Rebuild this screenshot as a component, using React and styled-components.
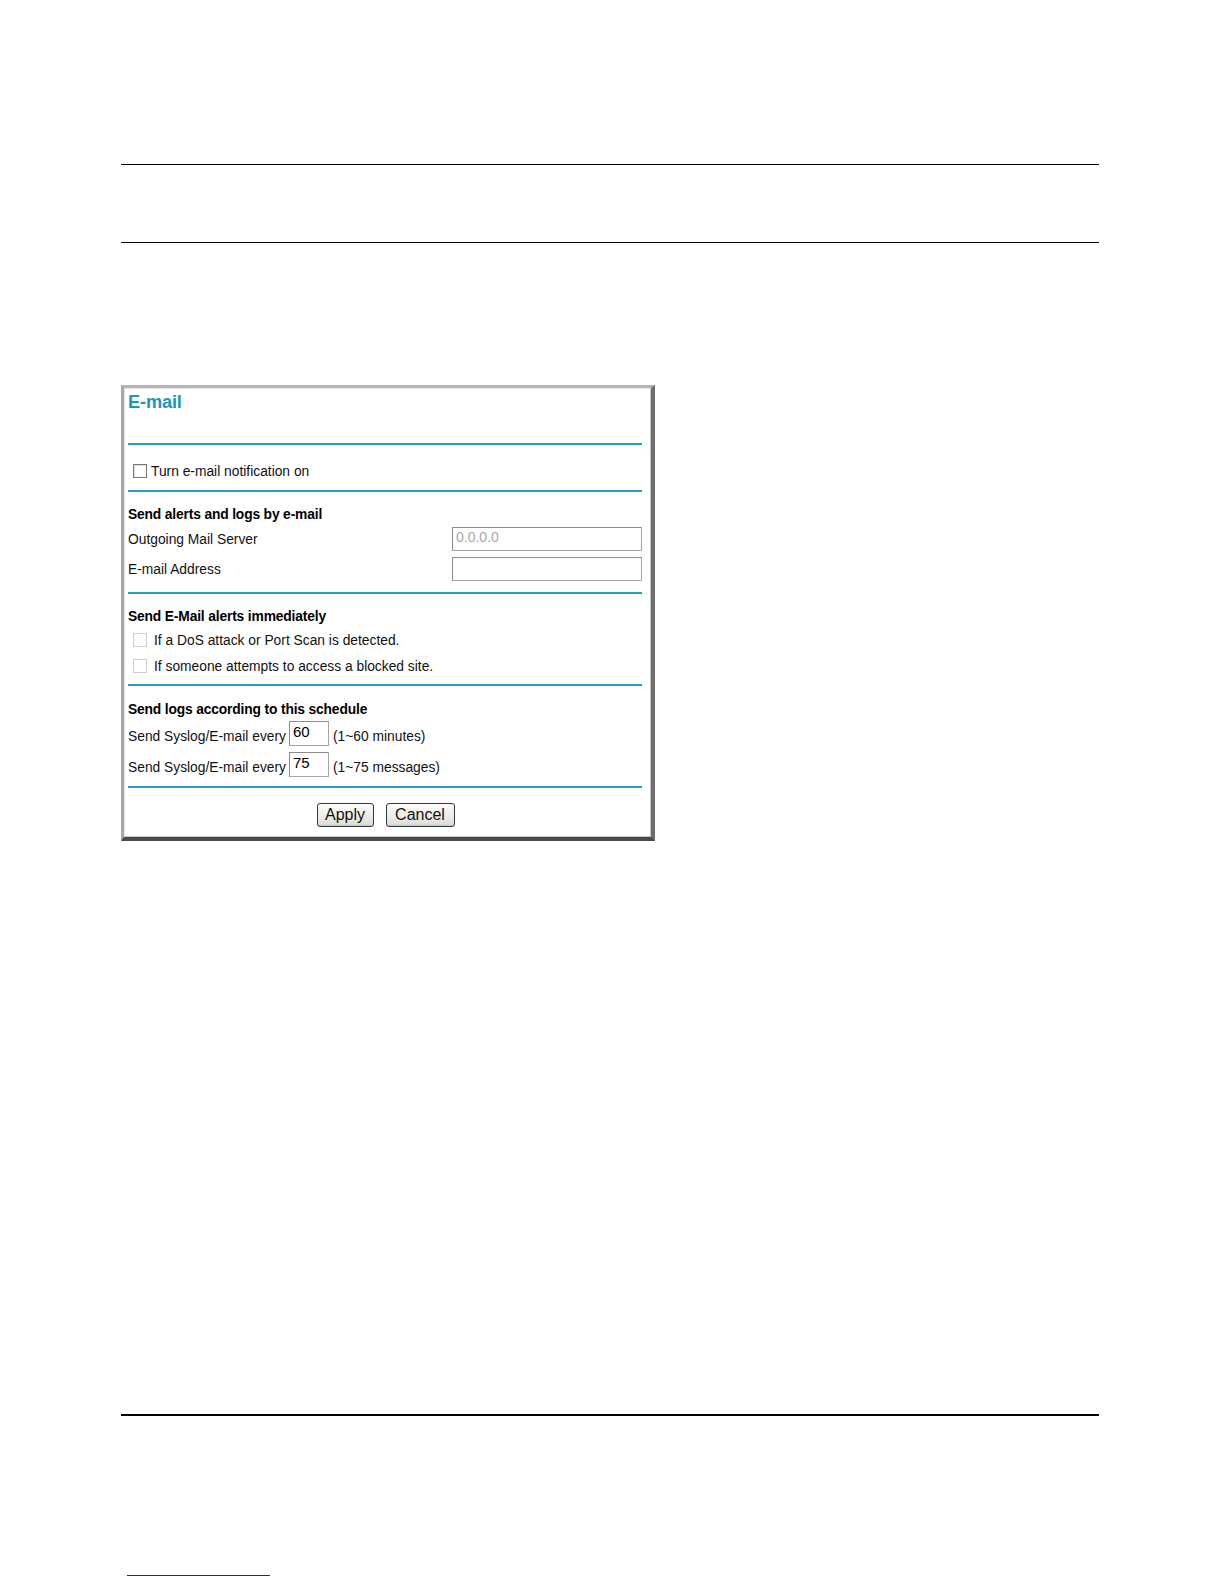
import React from "react";
import styled, { createGlobalStyle } from "styled-components";

const Global = createGlobalStyle`
  html, body { margin: 0; padding: 0; background: #fff; }
  body { font-family: "Liberation Sans", Arial, sans-serif; color: #000; }
`;

const Page = styled.div`
  width: 1224px;
  min-height: 1584px;
  padding-left: 121px;
  box-sizing: border-box;
  overflow: hidden;
`;

const PageRule = styled.div`
  width: 978px;
  height: ${(p) => p.$h || 1}px;
  background: #000;
  margin-top: ${(p) => p.$top}px;
`;

const Frame = styled.div`
  margin-top: ${(p) => p.$top}px;
  width: 534px;
  box-sizing: border-box;
  background: #fff;
  border-style: solid;
  border-width: 3px 4px 4px 3px;
  border-color: #b4b4b4 #6e6e6e #4a4a4a #a8a8a8;
  box-shadow: inset 1px 1px 0 #e2e2e2, inset -1px -1px 0 #c4c4c4;
  padding: 0 9px 0 4px;
  font-size: 13.8px;
`;

const Title = styled.div`
  height: 55px;
  font-size: 18.3px;
  font-weight: bold;
  line-height: 28px;
  color: #2196b4;
  letter-spacing: -0.2px;
`;

const Rule = styled.div`
  height: 2px;
  background: #2a9cc0;
`;

const Section = styled.div`
  display: flex;
  flex-direction: column;
  padding-top: ${(p) => p.$pt}px;
  padding-bottom: ${(p) => p.$pb}px;
`;

const Heading = styled.div`
  height: 20px;
  line-height: 20px;
  font-weight: bold;
  font-size: 13.8px;
  letter-spacing: -0.15px;
`;

const Row = styled.div`
  display: flex;
  align-items: ${(p) => (p.$bottom ? "flex-end" : "center")};
  height: ${(p) => p.$h || 24}px;
  margin-top: ${(p) => p.$mt || 0}px;
  justify-content: ${(p) => (p.$between ? "space-between" : "flex-start")};
  padding-left: ${(p) => p.$indent || 0}px;
  white-space: nowrap;
`;

const Check = styled.span`
  display: inline-block;
  width: 14px;
  height: 14px;
  box-sizing: border-box;
  background: #fff;
  border: 1px solid ${(p) => (p.$disabled ? "#cfcfcf" : "#7a7a7a")};
  box-shadow: ${(p) => (p.$disabled ? "none" : "inset 1px 1px 0 #dcdcdc")};
  margin-right: ${(p) => p.$mr}px;
  flex: none;
`;

const Label = styled.span`
  color: #111;
  line-height: 17px;
  padding-bottom: ${(p) => p.$pb || 0}px;
`;

const TextBox = styled.div`
  width: ${(p) => p.$w}px;
  height: ${(p) => p.$h || 24}px;
  box-sizing: border-box;
  border: 1px solid #a5a5a5;
  border-top-color: #8c8c8c;
  border-left-color: #8c8c8c;
  background: #fff;
  padding-left: 3px;
  font-size: ${(p) => (p.$big ? 15 : 14)}px;
  line-height: ${(p) => (p.$h || 24) - 5}px;
  color: ${(p) => (p.$disabled ? "#a8a8a8" : "#000")};
  margin: ${(p) => (p.$inline ? "0 4px 0 3px" : "0")};
  flex: none;
`;

const Buttons = styled.div`
  display: flex;
  justify-content: center;
  gap: 12px;
  height: 24px;
  padding-top: 15px;
  padding-bottom: 10px;
  padding-left: 1px;
`;

const Button = styled.button`
  width: ${(p) => p.$w}px;
  height: 24px;
  box-sizing: border-box;
  border: 1px solid #2c3a48;
  border-radius: 3px;
  background: linear-gradient(#fbfbf8, #ecebe4 60%, #dcdbd2);
  box-shadow: inset 0 -1px 0 #c8c6bb;
  font-family: "Liberation Sans", Arial, sans-serif;
  font-size: 16px;
  color: #111;
  padding: 0 0 1px;
  cursor: default;
`;

const FooterLink = styled.a`
  display: block;
  width: 143px;
  height: 1px;
  margin-top: 159px;
  margin-left: 6px;
  background: #1f1fa8;
`;

export default function App() {
  return (
    <>
      <Global />
      <Page>
        <PageRule $top={164} />
        <PageRule $top={77} />
        <Frame $top={142}>
          <Title>E-mail</Title>
          <Rule />
          <Section $pt={14} $pb={7}>
            <Row $indent={5}>
              <Check $mr={4} />
              <Label>Turn e-mail notification on</Label>
            </Row>
          </Section>
          <Rule />
          <Section $pt={13} $pb={11}>
            <Heading>Send alerts and logs by e-mail</Heading>
            <Row $between $mt={2}>
              <Label>Outgoing Mail Server</Label>
              <TextBox $w={190} $disabled>0.0.0.0</TextBox>
            </Row>
            <Row $between $mt={6}>
              <Label>E-mail Address</Label>
              <TextBox $w={190} />
            </Row>
          </Section>
          <Rule />
          <Section $pt={13} $pb={6}>
            <Heading>Send E-Mail alerts immediately</Heading>
            <Row $indent={5} $mt={1}>
              <Check $disabled $mr={7} />
              <Label>If a DoS attack or Port Scan is detected.</Label>
            </Row>
            <Row $indent={5} $mt={2}>
              <Check $disabled $mr={7} />
              <Label>If someone attempts to access a blocked site.</Label>
            </Row>
          </Section>
          <Rule />
          <Section $pt={14} $pb={9}>
            <Heading>Send logs according to this schedule</Heading>
            <Row $h={25} $mt={1} $bottom>
              <Label $pb={1}>Send Syslog/E-mail every</Label>
              <TextBox $w={40} $h={25} $big $inline>60</TextBox>
              <Label $pb={1}>(1~60 minutes)</Label>
            </Row>
            <Row $h={25} $mt={6} $bottom>
              <Label $pb={1}>Send Syslog/E-mail every</Label>
              <TextBox $w={40} $h={25} $big $inline>75</TextBox>
              <Label $pb={1}>(1~75 messages)</Label>
            </Row>
          </Section>
          <Rule />
          <Buttons>
            <Button $w={57}>Apply</Button>
            <Button $w={69}>Cancel</Button>
          </Buttons>
        </Frame>
        <PageRule $top={573} $h={2} />
        <FooterLink href="#" aria-label="link" />
      </Page>
    </>
  );
}
